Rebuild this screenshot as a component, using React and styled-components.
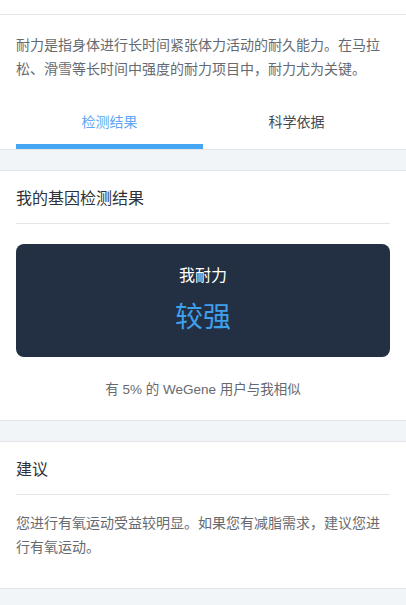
import React, { useState } from "react";
import styled, { createGlobalStyle } from "styled-components";

const GlobalStyle = createGlobalStyle`
  html, body {
    margin: 0;
    padding: 0;
    background: #ffffff;
  }
  body {
    font-family: "Liberation Sans", "Noto Sans CJK SC", sans-serif;
    -webkit-font-smoothing: antialiased;
  }
  * { box-sizing: border-box; }
`;

const Page = styled.div`
  width: 406px;
  background: #ffffff;
`;

const TopStrip = styled.div`
  height: 15px;
  border-bottom: 1px solid #e3e5e8;
`;

const Intro = styled.p`
  margin: 0;
  padding: 18px 16px 19px;
  font-size: 14px;
  line-height: 24px;
  color: #666a70;
`;

const TabBar = styled.div`
  display: flex;
  padding: 0 16px;
`;

const Tab = styled.button`
  flex: 1;
  height: 49px;
  padding: 0;
  margin: 0;
  border: none;
  border-bottom: 5px solid ${(p) => (p.$active ? "#45a7f4" : "transparent")};
  background: none;
  font-family: inherit;
  font-size: 14px;
  font-weight: 400;
  line-height: 44px;
  color: ${(p) => (p.$active ? "#62a6f3" : "#464a50")};
  cursor: pointer;
`;

const Band = styled.div`
  height: 22px;
  background: #f2f5f8;
  border-top: 1px solid #e3e5e8;
  border-bottom: 1px solid #e3e5e8;
`;

const Section = styled.section`
  padding: 0 16px ${(p) => p.$bottom}px;
`;

const SectionTitle = styled.h2`
  margin: 0;
  padding: 16px 0 12px;
  font-size: 16px;
  line-height: 24px;
  font-weight: 400;
  color: #2e3238;
  border-bottom: 1px solid #e3e5e8;
`;

const ResultCard = styled.div`
  margin-top: 20px;
  height: 113px;
  padding: 20px 0 19px;
  border-radius: 8px;
  background: #232f43;
  display: flex;
  flex-direction: column;
  align-items: center;
  gap: 10px;
`;

const CardLabel = styled.div`
  font-size: 16px;
  line-height: 24px;
  color: #ffffff;
`;

const CardValue = styled.div`
  font-size: 28px;
  line-height: 40px;
  color: #3fa0ec;
`;

const Caption = styled.p`
  margin: 23px 0 0;
  text-align: center;
  font-size: 13.5px;
  line-height: 20px;
  color: #666a70;
`;

const Body = styled.p`
  margin: 0;
  padding-top: 16px;
  font-size: 14px;
  line-height: 24px;
  color: #666a70;
`;

export default function App() {
  const [tab, setTab] = useState(0);
  return (
    <Page>
      <GlobalStyle />
      <TopStrip />
      <Intro>
        耐力是指身体进行长时间紧张体力活动的耐久能力。在马拉松、滑雪等长时间中强度的耐力项目中，耐力尤为关键。
      </Intro>
      <TabBar>
        <Tab $active={tab === 0} onClick={() => setTab(0)}>
          检测结果
        </Tab>
        <Tab $active={tab === 1} onClick={() => setTab(1)}>
          科学依据
        </Tab>
      </TabBar>
      <Band />
      <Section $bottom={20}>
        <SectionTitle>我的基因检测结果</SectionTitle>
        <ResultCard>
          <CardLabel>我耐力</CardLabel>
          <CardValue>较强</CardValue>
        </ResultCard>
        <Caption>有 5% 的 WeGene 用户与我相似</Caption>
      </Section>
      <Band />
      <Section $bottom={29}>
        <SectionTitle>建议</SectionTitle>
        <Body>
          您进行有氧运动受益较明显。如果您有减脂需求，建议您进行有氧运动。
        </Body>
      </Section>
      <Band />
    </Page>
  );
}
